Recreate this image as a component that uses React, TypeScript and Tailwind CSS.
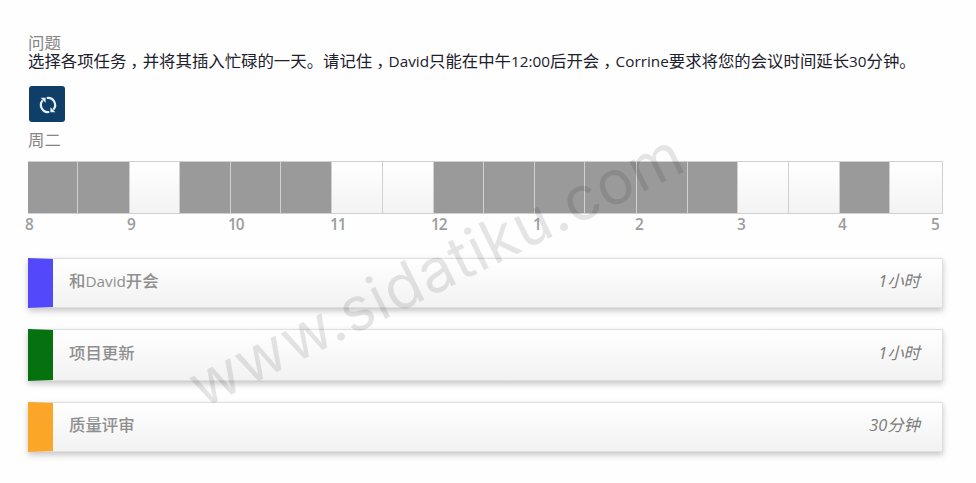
import React from "react";

const slots = [
  { busy: true, w: "w-[50px]" },
  { busy: true, w: "w-[52px]" },
  { busy: false, w: "w-[50px]" },
  { busy: true, w: "w-[51px]" },
  { busy: true, w: "w-[50px]" },
  { busy: true, w: "w-[51px]" },
  { busy: false, w: "w-[51px]" },
  { busy: false, w: "w-[51px]" },
  { busy: true, w: "w-[50px]" },
  { busy: true, w: "w-[51px]" },
  { busy: true, w: "w-[50px]" },
  { busy: true, w: "w-[52px]" },
  { busy: true, w: "w-[51px]" },
  { busy: true, w: "w-[50px]" },
  { busy: false, w: "w-[51px]" },
  { busy: false, w: "w-[51px]" },
  { busy: true, w: "w-[50px]" },
  { busy: false, w: "w-[53px]" },
];

const hours = [
  { label: "8", w: "w-[102px]" },
  { label: "9", w: "w-[101px]" },
  { label: "10", w: "w-[102px]" },
  { label: "11", w: "w-[101px]" },
  { label: "12", w: "w-[102px]" },
  { label: "1", w: "w-[102px]" },
  { label: "2", w: "w-[102px]" },
  { label: "3", w: "w-[101px]" },
  { label: "4", w: "w-[93px]" },
  { label: "5", w: "w-[12px]" },
];

const tasks = [
  { name: ["和", "David", "开会"], time: "1小时", color: "bg-[#5349fb]", box: "h-[50px] mb-[21px]", pad: "pt-[12px]" },
  { name: ["项目更新"], time: "1小时", color: "bg-[#05720f]", box: "h-[52px] mb-[21px]", pad: "pt-[13px]" },
  { name: ["质量评审"], time: "30分钟", color: "bg-[#fba629]", box: "h-[50px]", pad: "pt-[12px]" },
];

function Comma() {
  return <span className="inline-block w-[16.4px] pl-[4px]">，</span>;
}

function Latin({ children }: { children: React.ReactNode }) {
  return <span className="font-['Open_Sans'] text-[15.3px]">{children}</span>;
}

function ResetIcon() {
  return (
    <svg width="20" height="20" viewBox="0 0 20 20" fill="none" stroke="#e4f1f8" strokeWidth="2.2">
      <path d="M4.6 5.4A7.1 7.1 0 0 0 11.2 17" />
      <path d="M15.4 14.6A7.1 7.1 0 0 0 8.8 3" />
      <path d="M2.6 2.8H7.6V7.8Z" fill="#e4f1f8" stroke="none" />
      <path d="M17.4 17.2H12.4V12.2Z" fill="#e4f1f8" stroke="none" />
    </svg>
  );
}

export default function App() {
  return (
    <div className="relative h-[483px] w-[976px] overflow-hidden bg-[#fefefe] pl-[28px] pt-[34px] font-['Open_Sans','Noto_Sans_CJK_SC',sans-serif] text-[16.4px]">
      <div className="h-[18px] leading-[18px] text-[#858585]">问题</div>
      <p className="h-[19px] whitespace-nowrap leading-[18px] text-[#20202c]">
        选择各项任务<Comma />并将其插入忙碌的一天。请记住<Comma />
        <Latin>David</Latin>只能在中午<Latin>12:00</Latin>后开会<Comma />
        <Latin>Corrine</Latin>要求将您的会议时间延长<Latin>30</Latin>分钟。
      </p>
      <button className="ml-[1px] mt-[15px] flex h-[36px] w-[36px] items-center justify-center rounded-[3px] bg-[#0f3e68] pl-[1px] pt-[1px]">
        <ResetIcon />
      </button>
      <div className="mt-[9px] h-[22px] leading-[18px] text-[#858585]">周二</div>

      <div className="mt-[8px] flex h-[53px] w-[915px] border-y border-[#d0d0d0]">
        {slots.map((s, i) => (
          <div
            key={i}
            className={`${s.w} shrink-0 border-r border-[#d0d0d0] ${
              s.busy ? "bg-[#9a9a9a]" : "bg-gradient-to-b from-white to-[#f3f3f3]"
            }`}
          />
        ))}
      </div>
      <div className="-ml-[3px] flex h-[44px] pt-[1px] text-[15.4px] font-semibold leading-[20px] tracking-[-1px] text-[#9c9c9c]">
        {hours.map((h) => (
          <span key={h.label} className={`${h.w} shrink-0`}>
            {h.label}
          </span>
        ))}
      </div>

      {tasks.map((t) => (
        <div
          key={t.name.join("")}
          className={`${t.box} flex w-[915px] border border-l-0 border-[#dedede] bg-gradient-to-b from-white to-[#f2f2f2] shadow-[0_3px_6px_rgba(0,0,0,0.22)]`}
        >
          <div className={`${t.color} -my-px w-[25px] [clip-path:polygon(0_0,100%_2%,100%_98%,0_100%)]`} />
          <div className={`${t.pad} flex flex-1 items-start justify-between pl-[16px] pr-[22px] leading-[20px] text-[#8f8f8f]`}>
            <span className="font-medium">
              {t.name.map((part) => (part === "David" ? <Latin key={part}>{part}</Latin> : part))}
            </span>
            <span className="italic text-[#7c7c7c]">{t.time}</span>
          </div>
        </div>
      ))}

      <div className="pointer-events-none absolute left-[202px] top-[351px] origin-[0_58px] -rotate-[26.2deg] whitespace-nowrap font-['Inter'] text-[61px] font-normal leading-[72px] tracking-[0.9px] text-black/10">
        www.sidatiku.com
      </div>
    </div>
  );
}
